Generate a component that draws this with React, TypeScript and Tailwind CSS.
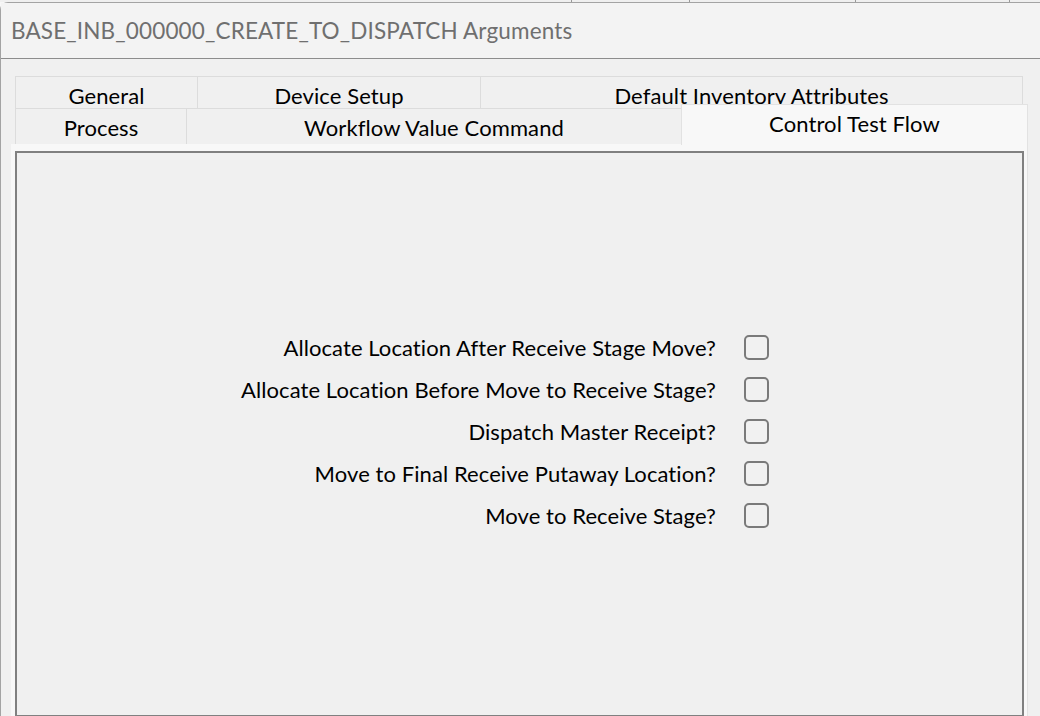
import React from "react";

const labels = [
  "Allocate Location After Receive Stage Move?",
  "Allocate Location Before Move to Receive Stage?",
  "Dispatch Master Receipt?",
  "Move to Final Receive Putaway Location?",
  "Move to Receive Stage?",
];

export default function App() {
  return (
    <div className="w-[1040px] h-[716px] overflow-hidden bg-[#f7f7f7] font-['Lato','Open_Sans',sans-serif] text-black">
      {/* window behind (only its bottom edge visible) */}
      <div className="h-[2px] overflow-hidden flex text-[14px] leading-[14px] text-[#555] bg-[#efefef]">
        <div className="w-[455px]" />
        <div className="-mt-[12px] w-[117px] flex gap-[40px] border-r border-[#999]">
          <span>BI</span>
          <span>x</span>
        </div>
        <div className="-mt-[12px] w-[118px] pl-[36px] border-r border-[#999]">ADD</div>
        <div className="-mt-[12px] w-[166px] pl-[32px] border-r border-[#999]">OPEN INFO</div>
        <div className="-mt-[12px] w-[154px] pl-[40px] border-r border-[#999]">RESULTS</div>
        <div className="-mt-[12px] pl-[8px]">RE</div>
      </div>

      {/* dialog */}
      <div className="h-[714px] rounded-tl-[8px] border-t border-l border-[#a3a3a3] bg-[#f0f0f0] flex flex-col">
        <div className="h-[56px] shrink-0 bg-[#f3f3f3] border-b border-[#8c8c8c] flex items-center pl-[10px] pt-[1px] text-[22.5px] text-[#6f6f6f] tracking-[0.15px]">
          BASE_INB_000000_CREATE_TO_DISPATCH Arguments
        </div>

        <div className="flex-1 pl-[10px] pt-[17px]">
          {/* tab headers */}
          <div className="relative ml-[4px] w-[1008px] text-[22px] leading-[28px] tracking-[0.1px]">
            <div className="flex h-[32px]">
              <div className="w-[182px] border-t border-l border-[#dcdcdc] bg-[#f0f0f0] overflow-hidden text-center pt-[5px]">General</div>
              <div className="w-[283px] border-t border-l border-[#dcdcdc] bg-[#f0f0f0] overflow-hidden text-center pt-[5px]">Device Setup</div>
              <div className="w-[543px] border-t border-l border-r border-[#dcdcdc] bg-[#f0f0f0] overflow-hidden text-center pt-[5px]">Default Inventory Attributes</div>
            </div>
            <div className="relative flex h-[36px]">
              <div className="w-[171px] border-t border-l border-[#dcdcdc] bg-[#f0f0f0] text-center pt-[5px]">Process</div>
              <div className="w-[495px] border-t border-l border-[#dcdcdc] bg-[#f0f0f0] text-center pt-[5px]">Workflow Value Command</div>
            </div>
            <div className="absolute left-[666px] top-[28px] w-[347px] h-[41px] bg-[#f8f8f8] border-t border-l border-r border-[#e2e2e2] text-center pt-[5px] z-10">
              Control Test Flow
            </div>
          </div>

          {/* tab content */}
          <div className="w-[1017px] h-[580px] bg-[#f8f8f8] border-r border-[#e2e2e2] pt-[7px] pl-[4px]">
            <div className="w-[1009px] h-[566px] border-2 border-[#808080] bg-[#f0f0f0] pt-[182px] pl-[223px]">
              <div className="grid grid-cols-[476px_25px] gap-x-[28px] gap-y-[17px] items-center text-[22px] tracking-[0.08px]">
                {labels.map((l) => (
                  <React.Fragment key={l}>
                    <div className="text-right leading-[25px] whitespace-nowrap">{l}</div>
                    <div className="w-[25px] h-[25px] rounded-[5px] border-2 border-[#7a7a7a] bg-[#f1f1f1]" />
                  </React.Fragment>
                ))}
              </div>
            </div>
          </div>
        </div>
      </div>
    </div>
  );
}
